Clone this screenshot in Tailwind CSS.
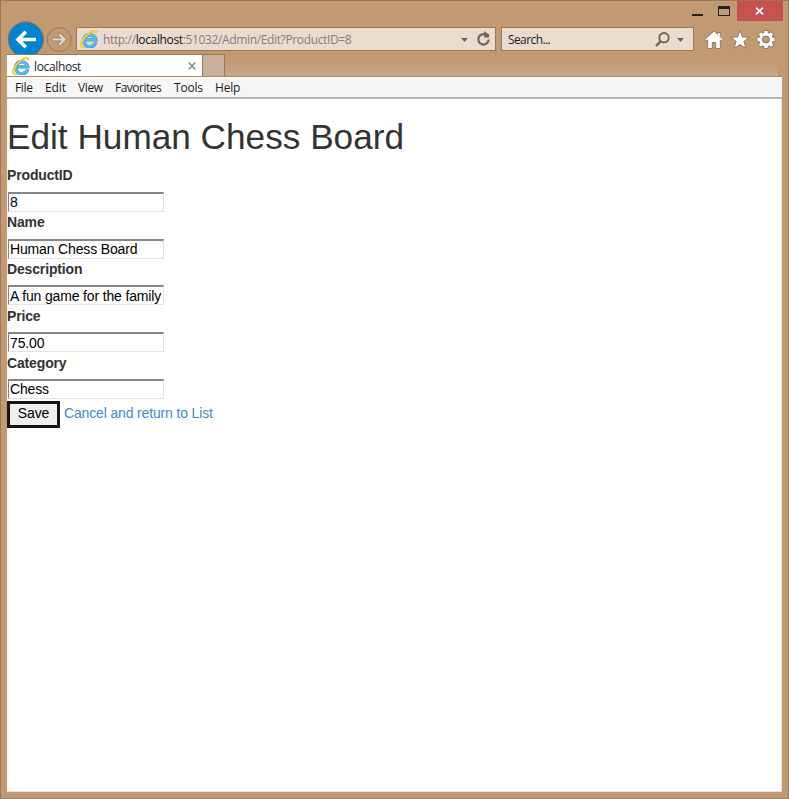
<!DOCTYPE html>
<html lang="en">
<head>
<meta charset="utf-8">
<title>localhost</title>
<script src="https://cdn.jsdelivr.net/npm/@tailwindcss/browser@4"></script>
</head>
<body class="overflow-hidden">
<svg class="hidden">
  <symbol id="ie" viewBox="0 0 18 18">
    <path d="M15.600 12.200A6 6 0 1 1 15.700 9.700H5.200" fill="none" stroke="#3a94cc" stroke-width="3.500"/>
    <path d="M15.300 12.200A6 6 0 1 1 15.500 9.700H5.200" fill="none" stroke="#5cbdec" stroke-width="2.300"/>
    <path d="M4.800 16.600C2.300 17.600.5 16.600 1.100 13.500C2.200 9 7 3.900 11.800 1.800C15.300.4 17 1.300 16.300 3.600" fill="none" stroke="#e5a820" stroke-width="1.700"/>
    <path d="M4.500 16.500C2.300 17.400.8 16.400 1.300 13.600C2.400 9.200 7.200 4.100 11.900 2C15 .7 16.700 1.400 16.200 3.400" fill="none" stroke="#ffd43c" stroke-width="1.300"/>
  </symbol>
</svg>
<div class="relative flex h-[799px] w-[789px] flex-col border border-[#9c7858] bg-[#c19973] pr-[6px] pb-[6px] pl-[6px] font-['Open_Sans',sans-serif] text-[12px] leading-4 tracking-[-0.36px] text-[#1c1c1c]">
  <div class="-mr-px flex h-5 shrink-0 justify-end">
    <div class="mt-[13px] mr-[15px] h-[2px] w-[11px] bg-[#222]"></div>
    <div class="mt-[5px] mr-[7px] h-[10px] w-3 border border-t-[3px] border-[#222]"></div>
    <div class="flex h-5 w-[46px] items-center justify-center bg-[#c75050]">
      <svg class="mr-px h-2 w-[9px]" viewBox="0 0 9 8"><path d="M1 .7l7 6.6M8 .7l-7 6.6" stroke="#fff" stroke-width="1.8"/></svg>
    </div>
  </div>
  <div class="flex h-[33px] shrink-0 items-start">
    <div class="h-[33px] w-[37px] shrink-0 overflow-hidden">
      <svg class="h-[37px] w-[37px]" viewBox="0 0 37 37"><circle cx="18.8" cy="18.5" r="17.6" fill="#0184cc" stroke="#8c7054"/><path d="M29 18.5H12M18.8 10.8L11 18.5l7.800 7.700" fill="none" stroke="#fff" stroke-width="3.600"/></svg>
    </div>
    <svg class="mt-[6px] ml-[2px] h-[26px] w-[26px] shrink-0" viewBox="0 0 26 26"><circle cx="13.300" cy="12.500" r="12" fill="none" stroke="#9c7858"/><path d="M7 12.500h11M13.500 7.500l5 5-5 5" fill="none" stroke="#9c7858" stroke-width="3.400"/><path d="M7 12.500h11M13.500 7.500l5 5-5 5" fill="none" stroke="#e9dccf" stroke-width="2.200"/></svg>
    <div class="mt-[6px] ml-[4px] flex h-6 w-[420px] shrink-0 items-center border border-[#9c7858] bg-[#e9dccf] pl-[3px]">
      <svg class="h-[18px] w-[18px]"><use href="#ie"/></svg>
      <div class="ml-[5px] w-[358px] pt-[2px] whitespace-nowrap text-[#808080]">http://<span class="text-[#111]">localhost</span>:51032/Admin/Edit?ProductID=8</div>
      <svg class="mt-[2px] h-1 w-[7px] shrink-0" viewBox="0 0 7 4"><path d="M0 0h7L3.500 4z" fill="#6d6357"/></svg>
      <svg class="ml-[8px] h-4 w-[15px] shrink-0" viewBox="0 0 14 16"><path d="M10 4.100A5.200 5.200 0 1 0 12.200 8.500" fill="none" stroke="#6d6357" stroke-width="2.200"/><path d="M7.600 0v6.400h5V3.600z" fill="#6d6357"/></svg>
    </div>
    <div class="mt-[6px] ml-[5px] flex h-6 w-[193px] shrink-0 items-center border border-[#9c7858] bg-[#e9dccf] pl-[6px]">
      <div class="w-[147px] pt-[2px] tracking-[-0.6px]">Search...</div>
      <svg class="h-[15px] w-[15px]" viewBox="0 0 15 15"><circle cx="9" cy="5.700" r="4.700" fill="none" stroke="#6d6357" stroke-width="1.900"/><path d="M5.600 9.300L1 14" stroke="#6d6357" stroke-width="2.400"/></svg>
      <svg class="mt-[2px] ml-[7px] h-1 w-[7px]" viewBox="0 0 7 4"><path d="M0 0h7L3.500 4z" fill="#6d6357"/></svg>
    </div>
    <svg class="mt-[9px] ml-[10px] h-5 w-5 shrink-0" viewBox="0 0 20 20"><path d="M10 1L.8 9.500l1.400 1.600 1.500-1.200V18.500h4.600v-6h3.400v6h4.600V9.900l1.500 1.200 1.400-1.600-3-2.800V2.500h-2.700v1.700z" fill="#fff" stroke="#8c7054" stroke-width=".9"/></svg>
    <svg class="mt-[9px] ml-[6px] h-5 w-5 shrink-0" viewBox="0 0 20 20"><path d="M10 .5l2.400 6.500 6.900.2-5.400 4.200 2 7L10 14.500l-5.900 3.900 2-7L.7 7.200l6.900-.2z" fill="#fff" stroke="#8c7054" stroke-width=".9"/></svg>
    <svg class="mt-[9px] ml-[6px] h-5 w-5 shrink-0" viewBox="0 0 20 20"><g stroke="#8c7054" stroke-width="4.800"><path d="M10 .3v18.400M.8 9.500h18.400M3.500 3l13 13M16.500 3l-13 13"/></g><circle cx="10" cy="9.500" r="7.300" fill="#8c7054"/><g stroke="#fff" stroke-width="3.400"><path d="M10 .9v17.200M1.400 9.500h17.200M3.900 3.400l12.200 12.200M16.100 3.400L3.900 15.600"/></g><circle cx="10" cy="9.500" r="6.700" fill="#fff"/><circle cx="10" cy="9.500" r="3.500" fill="#c19973" stroke="#8c7054"/></svg>
  </div>
  <div class="flex h-[23px] shrink-0 border-b border-[#aa8563]">
    <div class="flex h-[22px] w-[195px] shrink-0 items-center border-t border-[#9c7858] bg-white pl-[5px]">
      <svg class="h-[18px] w-[18px]"><use href="#ie"/></svg>
      <div class="ml-[4px] w-[154px] pt-[2px]">localhost</div>
      <svg class="h-2 w-2" viewBox="0 0 8 8"><path d="M.7.700l6.600 6.600M7.300.700L.7 7.300" stroke="#999" stroke-width="1.800"/></svg>
    </div>
    <div class="h-[22px] w-[23px] shrink-0 border border-b-0 border-[#9c7858] bg-[#c8b09b]"></div>
    <div class="mt-[7px] mr-1 h-[15px] grow rounded-tr-xl bg-linear-to-b from-[#c19973] to-[#c8a88b]"></div>
  </div>
  <div class="flex h-[22px] shrink-0 items-center border-t border-b-2 border-t-white border-b-[#b4b4b4] bg-[#f6f6f6] pt-px pl-2">
    <div class="w-[30px]">File</div>
    <div class="w-[33px] tracking-[-0.1px]">Edit</div>
    <div class="w-[37px]">View</div>
    <div class="w-[59px] tracking-[-0.5px]">Favorites</div>
    <div class="w-[41px] tracking-[-0.2px]">Tools</div>
    <div class="tracking-[-0.2px]">Help</div>
  </div>
  <main class="flex min-h-0 grow flex-col border-r border-b border-[#e8e0d8] bg-white font-['Liberation_Sans',Arial,sans-serif] text-[14px] tracking-[-0.15px] text-[#333]">
    <h1 class="mt-[18px] h-10 text-[35.200px] leading-10 tracking-normal whitespace-nowrap">Edit Human Chess Board</h1>
    <form class="mt-[8px] flex flex-col leading-5">
      <label class="h-[26.800px] pt-[0.300px] font-bold">ProductID</label>
      <input class="ml-px block h-5 w-[156px] border-t-2 border-r border-b border-l border-t-[#858585] border-r-[#e3e3e3] border-b-[#e3e3e3] border-l-[#858585] px-px text-black" value="8">
      <label class="h-[26.800px] pt-[0.300px] font-bold">Name</label>
      <input class="ml-px block h-5 w-[156px] border-t-2 border-r border-b border-l border-t-[#858585] border-r-[#e3e3e3] border-b-[#e3e3e3] border-l-[#858585] px-px text-black" value="Human Chess Board">
      <label class="h-[26.800px] pt-[0.500px] font-bold">Description</label>
      <input class="ml-px block h-5 w-[156px] border-t-2 border-r border-b border-l border-t-[#858585] border-r-[#e3e3e3] border-b-[#e3e3e3] border-l-[#858585] px-px text-black" value="A fun game for the family">
      <label class="h-[26.800px] pt-[0.500px] font-bold">Price</label>
      <input class="ml-px block h-5 w-[156px] border-t-2 border-r border-b border-l border-t-[#858585] border-r-[#e3e3e3] border-b-[#e3e3e3] border-l-[#858585] px-px text-black" value="75.00">
      <label class="h-[26.800px] pt-[0.800px] font-bold">Category</label>
      <input class="ml-px block h-5 w-[156px] border-t-2 border-r border-b border-l border-t-[#858585] border-r-[#e3e3e3] border-b-[#e3e3e3] border-l-[#858585] px-px text-black" value="Chess">
      <div class="mt-[2px] flex">
        <button type="button" class="flex h-[27px] w-[53px] justify-center border-[3px] border-[#151515] bg-[#efefef] leading-[19px] text-black">Save</button>
        <a href="#" class="ml-1 pt-[2px] whitespace-nowrap text-[#428bca]">Cancel and return to List</a>
      </div>
    </form>
  </main>
</div>
</body>
</html>
